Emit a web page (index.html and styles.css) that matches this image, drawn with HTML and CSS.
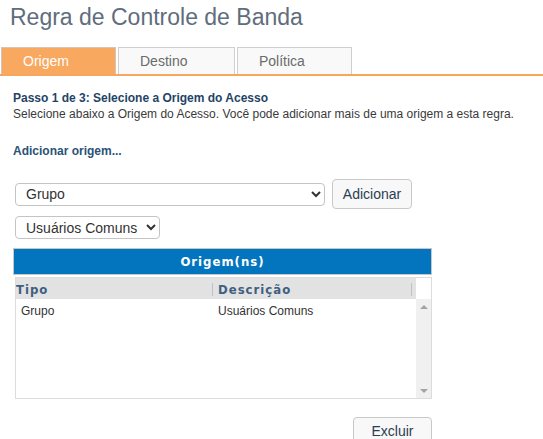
FILE: index.html
```html
<!DOCTYPE html>
<html lang="pt-BR">
<head>
  <meta charset="UTF-8">
  <meta name="viewport" content="width=device-width, initial-scale=1.0">
  <title>Regra de Controle de Banda</title>
  <link rel="stylesheet" href="styles.css">
</head>
<body>
  <h1 class="page-title">Regra de Controle de Banda</h1>

  <nav class="tabs">
    <a class="tab active">Origem</a>
    <a class="tab">Destino</a>
    <a class="tab">Política</a>
  </nav>

  <div class="content">
    <p class="step-title">Passo 1 de 3: Selecione a Origem do Acesso</p>
    <p class="step-text">Selecione abaixo a Origem do Acesso. Você pode adicionar mais de uma origem a esta regra.</p>

    <p class="add-label">Adicionar origem...</p>

    <div class="add-row">
      <select class="select select-type">
        <option>Grupo</option>
      </select>
      <button class="btn">Adicionar</button>
    </div>

    <div class="add-row">
      <select class="select select-group">
        <option>Usuários Comuns</option>
      </select>
    </div>

    <div class="panel">
      <div class="panel-header">Origem(ns)</div>
      <div class="grid">
        <div class="grid-head">
          <div class="grid-cols">
            <span class="col col-tipo">Tipo</span>
            <span class="col col-desc">Descrição</span>
          </div>
          <div class="corner"></div>
        </div>
        <div class="grid-body">
          <div class="grid-rows">
            <div class="grid-row">
              <span class="col col-tipo">Grupo</span>
              <span class="col col-desc">Usuários Comuns</span>
            </div>
          </div>
          <div class="scrollbar">
            <span class="arrow up"></span>
            <span class="arrow down"></span>
          </div>
        </div>
      </div>
    </div>

    <div class="actions">
      <button class="btn btn-delete">Excluir</button>
    </div>
  </div>
</body>
</html>
```

FILE: styles.css
```css
body {
  font-family: 'Liberation Sans', Arial, sans-serif;
  margin: 0;
  padding: 0;
  background: #fff;
  color: #333;
  overflow: hidden;
}
.page-title {
  font-weight: normal;
  font-size: 23px;
  color: #5f6d7c;
  margin: 0;
  padding: 4px 0 0 10px;
  height: 43px;
  line-height: 26px;
}
.tabs {
  display: flex;
  gap: 2px;
  padding-left: 1px;
  border-bottom: 2px solid #f8a55e;
}
.tab {
  box-sizing: border-box;
  width: 115px;
  height: 27px;
  padding-left: 21px;
  line-height: 27px;
  font-size: 14px;
  color: #6b6b6b;
  background: #f9f9f9;
  border: 1px solid #cfcfcf;
  border-bottom: none;
}
.tab:nth-child(2) {
  width: 117px;
}
.tab.active {
  background: #f8a85f;
  color: #fff;
  border-color: #d2c6bc;
}
.content {
  padding: 0 0 0 13px;
}
.step-title {
  margin: 14px 0 0;
  font-size: 12px;
  line-height: 16px;
  font-weight: bold;
  color: #1f4466;
}
.step-text {
  margin: 0;
  font-size: 12px;
  line-height: 16px;
  color: #3a3a3a;
}
.add-label {
  margin: 21px 0 0;
  font-size: 12px;
  line-height: 16px;
  font-weight: bold;
  color: #2b5278;
}
.add-row {
  display: flex;
  align-items: center;
  gap: 7px;
  padding-left: 2px;
  margin-top: 7px;
}
.add-row:first-of-type {
  margin-top: 20px;
}
.select {
  box-sizing: border-box;
  height: 23px;
  font-family: 'Liberation Sans', Arial, sans-serif;
  font-size: 14px;
  color: #333;
  background: #fff;
  border: 1px solid #c4c4c4;
  border-radius: 4px;
  padding: 0 0 0 6px;
}
.select-type {
  width: 310px;
}
.select-group {
  width: 145px;
}
.btn {
  box-sizing: border-box;
  height: 30px;
  width: 80px;
  font-family: 'Liberation Sans', Arial, sans-serif;
  font-size: 14px;
  color: #2b3e52;
  background: #f8f8f8;
  border: 1px solid #c8c8c8;
  border-radius: 4px;
  cursor: pointer;
}
.panel {
  margin-top: 9px;
  width: 419px;
}
.panel-header {
  box-sizing: border-box;
  height: 27px;
  line-height: 25px;
  text-align: center;
  background: #0275be;
  border: 1px solid #c7c7c7;
  color: #fff;
  font-family: 'DejaVu Sans Condensed', 'DejaVu Sans', Verdana, sans-serif;
  font-weight: bold;
  font-size: 13px;
  letter-spacing: 1px;
}
.grid {
  margin: 2px 0 0 2px;
  width: 417px;
  box-sizing: border-box;
  border: 1px solid #dcdcdc;
}
.grid-head {
  display: flex;
  height: 21px;
}
.grid-cols {
  flex: 1;
  display: flex;
  background: #e2e2e2;
  font-family: 'DejaVu Sans Condensed', 'DejaVu Sans', Verdana, sans-serif;
  font-weight: bold;
  font-size: 13px;
  letter-spacing: 1px;
  color: #3e5f80;
}
.grid-cols .col {
  box-sizing: border-box;
  height: 13px;
  line-height: 13px;
  margin-top: 5px;
  border-right: 1px solid #b8c2cc;
}
.grid-cols .col-tipo {
  width: 197px;
}
.grid-cols .col-desc {
  width: 199px;
  padding-left: 5px;
}
.corner {
  width: 15px;
  background: #fff;
}
.grid-body {
  display: flex;
  height: 99px;
}
.grid-rows {
  flex: 1;
}
.grid-row {
  display: flex;
  font-size: 12px;
  line-height: 22px;
  color: #333;
  padding-top: 1px;
}
.grid-row .col-tipo {
  width: 202px;
  padding-left: 5px;
  box-sizing: border-box;
}
.scrollbar {
  width: 15px;
  background: #f0f0f0;
  display: flex;
  flex-direction: column;
  justify-content: space-between;
  align-items: center;
  padding: 6px 0 5px;
  box-sizing: border-box;
}
.arrow {
  width: 0;
  height: 0;
  border-left: 4px solid transparent;
  border-right: 4px solid transparent;
}
.arrow.up {
  border-bottom: 4px solid #a3a3a3;
}
.arrow.down {
  border-top: 4px solid #a3a3a3;
}
.actions {
  width: 419px;
  display: flex;
  justify-content: flex-end;
  margin-top: 18px;
}
.btn-delete {
  width: 79px;
  height: 28px;
}
```
